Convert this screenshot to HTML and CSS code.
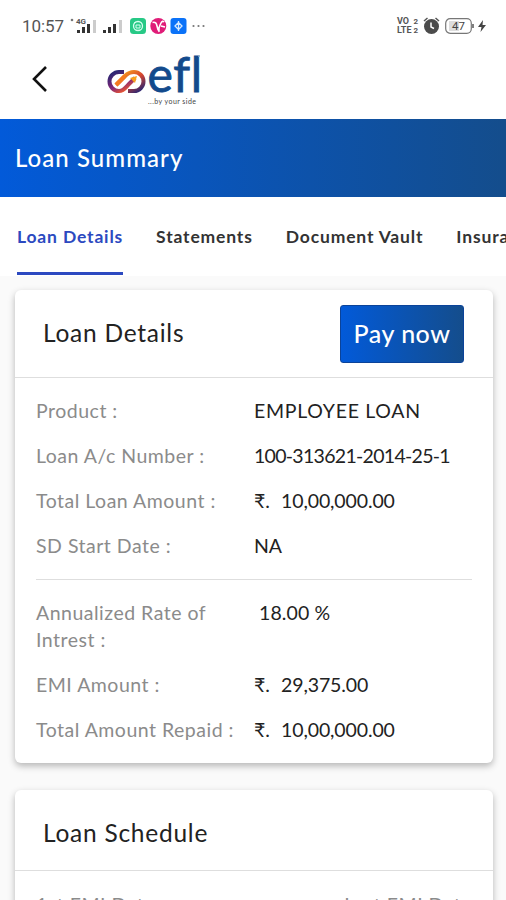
FILE: index.html
```html
<!DOCTYPE html>
<html lang="en">
<head>
    <meta charset="UTF-8">
    <meta name="viewport" content="width=device-width, initial-scale=1.0">
    <title>Loan Summary</title>
    <link rel="stylesheet" href="styles.css">
</head>
<body>
    <div class="status-bar">
        <span class="time">10:57</span>
        <svg class="signals" width="55" height="20" viewBox="0 0 55 20">
            <circle cx="2" cy="4" r="1.3" fill="#777"/>
            <text x="6" y="8" font-size="8" font-weight="700" fill="#555">4G</text>
            <g fill="#333">
                <rect x="7" y="14" width="3" height="3"/>
                <rect x="12" y="11" width="3" height="6"/>
                <rect x="17" y="8" width="3" height="9"/>
                <rect x="33" y="14" width="3" height="3"/>
                <rect x="38" y="11" width="3" height="6"/>
                <rect x="43" y="8" width="3" height="9"/>
            </g>
            <rect x="23" y="4" width="3" height="13" fill="#ccc"/>
            <rect x="49" y="4" width="3" height="13" fill="#ccc"/>
        </svg>
        <svg class="app-icons" width="77" height="16" viewBox="0 0 77 16">
            <rect x="0" y="0" width="16" height="16" rx="3.5" fill="#27c986"/>
            <circle cx="8" cy="8" r="4.5" fill="none" stroke="#d5fff0" stroke-width="1.3"/>
            <path d="M6 7h4v3H6zM4 5l2-1" fill="none" stroke="#d5fff0"/>
            <circle cx="28.3" cy="8" r="8" fill="#e01c78"/>
            <path d="M22.5 4.5c3-1 4 1 4.5 3.5s1 4 2 5M29 14c-1-5 1-7 2-9s2-2 3-1M31 8l4 1" fill="none" stroke="#fff" stroke-width="1.6"/>
            <rect x="40.5" y="0" width="16" height="16" rx="3" fill="#0b72f8"/>
            <path d="M48.5 3v10M45 8l3.5-3.5L52 8l-3.5 3.5z" fill="none" stroke="#d7eaff" stroke-width="1.3"/>
            <g fill="#777">
                <circle cx="63.5" cy="8" r="1.1"/>
                <circle cx="68.5" cy="8" r="1.1"/>
                <circle cx="73.5" cy="8" r="1.1"/>
            </g>
        </svg>
        <div class="status-right">
            <span class="volte"><span>VO <i>2</i></span><span>LTE<i>2</i></span></span>
            <svg width="17" height="18" viewBox="0 0 17 18">
                <circle cx="8.5" cy="9.5" r="7.5" fill="#4b4b4b"/>
                <path d="M1 4l3.5-3M16 4l-3.5-3" stroke="#555" stroke-width="1.5"/>
                <path d="M8 5.5v4.5l3 1.5" fill="none" stroke="#fff" stroke-width="1.5"/>
            </svg>
            <svg class="battery" width="29" height="16" viewBox="0 0 29 16">
                <rect x="4" y="3" width="10" height="10" fill="#ddd"/>
                <rect x="0.7" y="0.7" width="25.6" height="14.6" rx="4.5" fill="none" stroke="#777" stroke-width="1.2"/>
                <path d="M28 6v4" stroke="#555" stroke-width="1.5"/>
                <text x="13.5" y="12" text-anchor="middle" font-size="11.5" fill="#444">47</text>
            </svg>
            <svg class="bolt" width="8" height="12" viewBox="0 0 8 12">
                <path d="M5 0L0 7h3.5L2.5 12 8 5H4.5z" fill="#444"/>
            </svg>
        </div>
    </div>

    <div class="app-bar">
        <svg class="back" width="16" height="28" viewBox="0 0 16 28">
            <path d="M14 2L2 14l12 12" fill="none" stroke="#111" stroke-width="2.6"/>
        </svg>
        <svg class="logo" width="98" height="58" viewBox="0 0 98 58">
            <defs>
                <linearGradient id="loopLeft" gradientUnits="userSpaceOnUse" x1="14" y1="20" x2="24" y2="40">
                    <stop offset="0" stop-color="#2c2672"/>
                    <stop offset="0.6" stop-color="#842779"/>
                    <stop offset="1" stop-color="#f1592a"/>
                </linearGradient>
                <linearGradient id="loopRight" gradientUnits="userSpaceOnUse" x1="20" y1="20" x2="34" y2="42">
                    <stop offset="0" stop-color="#f9a01b"/>
                    <stop offset="0.5" stop-color="#d6452f"/>
                    <stop offset="1" stop-color="#2c2672"/>
                </linearGradient>
            </defs>
            <g fill="none" stroke-width="4">
                <path d="M19 22H14A9.5 9.5 0 0 0 14 41c5 0 7-4 10-7l6-6" stroke="url(#loopLeft)"/>
                <path d="M11 35l9-9c3-3 5-4 9-4A9.5 9.5 0 0 1 29 41H23" stroke="url(#loopRight)"/>
                <path d="M11 35l9-9" stroke="#f57a20"/>
            </g>
            <path d="M25 28l7-2-2 7z" fill="#f9a01b"/>
            <text class="logo-name" x="42.5" y="42">efl</text>
            <circle cx="94" cy="6" r="1" fill="#8aa5c5"/>
            <text class="logo-tag" x="43" y="54" textLength="48">...by your side</text>
        </svg>
    </div>

    <h1 class="page-title">Loan Summary</h1>

    <div class="tabs">
        <a class="tab active">Loan Details</a>
        <a class="tab">Statements</a>
        <a class="tab">Document Vault</a>
        <a class="tab">Insurance</a>
    </div>

    <div class="content">
        <div class="card">
            <div class="card-header">
                <h2>Loan Details</h2>
                <button class="pay-btn">Pay now</button>
            </div>
            <div class="card-body">
                <div class="row"><span class="label">Product :</span><span class="value caps">EMPLOYEE LOAN</span></div>
                <div class="row"><span class="label">Loan A/c Number :</span><span class="value account">100-313621-2014-25-1</span></div>
                <div class="row"><span class="label">Total Loan Amount :</span><span class="value"><span class="rupee">₹.</span>10,00,000.00</span></div>
                <div class="row"><span class="label">SD Start Date :</span><span class="value">NA</span></div>
                <hr>
                <div class="row"><span class="label">Annualized Rate of Intrest :</span><span class="value rate">18.00 %</span></div>
                <div class="row"><span class="label">EMI Amount :</span><span class="value"><span class="rupee">₹.</span>29,375.00</span></div>
                <div class="row"><span class="label">Total Amount Repaid :</span><span class="value"><span class="rupee">₹.</span>10,00,000.00</span></div>
            </div>
        </div>

        <div class="card">
            <div class="card-header schedule">
                <h2>Loan Schedule</h2>
            </div>
            <div class="dates">
                <span>1st EMI Date</span>
                <span>Last EMI Date</span>
            </div>
        </div>
    </div>
</body>
</html>
```
FILE: styles.css
```css
* {
    box-sizing: border-box;
}

body {
    margin: 0;
    height: 900px;
    overflow: hidden;
    display: flex;
    flex-direction: column;
    font-family: Lato, "Noto Sans", sans-serif;
    background-color: #fafafa;
}

.status-bar {
    flex: none;
    height: 50px;
    padding: 2px 20px 0 22px;
    display: flex;
    align-items: center;
    background-color: #fff;
    font-family: Roboto, sans-serif;
    color: #555;
}

.time {
    width: 48px;
    font-size: 17px;
    letter-spacing: -0.1px;
}

.app-icons {
    margin-left: 5px;
}

.status-right {
    margin-left: auto;
    display: flex;
    align-items: center;
}

.volte {
    width: 21px;
    margin-right: 5px;
    font-size: 9px;
    line-height: 9px;
    font-weight: 700;
}

.volte span {
    display: flex;
    justify-content: space-between;
}

.volte i {
    font-size: 8px;
    font-style: normal;
}

.battery {
    margin-left: 5px;
}

.bolt {
    margin-left: 4px;
}

.app-bar {
    flex: none;
    height: 69px;
    padding-left: 32px;
    display: flex;
    align-items: flex-start;
    background-color: #fff;
}

.back {
    margin-top: 15px;
}

.logo {
    margin-left: 57px;
}

.logo-name {
    font-family: Lato, sans-serif;
    font-size: 48px;
    letter-spacing: 0.6px;
    fill: #124a8c;
    stroke: #124a8c;
    stroke-width: 0.8px;
}

.logo-tag {
    font-size: 7px;
    fill: #444;
}

.page-title {
    flex: none;
    height: 78px;
    margin: 0;
    padding-left: 15px;
    font-size: 24px;
    font-weight: 500;
    line-height: 77px;
    letter-spacing: 1.05px;
    color: #fff;
    background: linear-gradient(to right, #025ad9, #144d8c);
}

.tabs {
    flex: none;
    height: 79px;
    padding-left: 17px;
    display: flex;
    gap: 33px;
    overflow: hidden;
    background-color: #fff;
    white-space: nowrap;
}

.tab {
    height: 78px;
    font-size: 17.5px;
    font-weight: 700;
    line-height: 79px;
    letter-spacing: 0.84px;
    color: #333;
}

.tab.active {
    color: #2c49c0;
    border-bottom: 3px solid #2c49c0;
}

.content {
    padding: 14px 13px 0 15px;
}

.card {
    margin-bottom: 27px;
    background-color: #fff;
    border-radius: 6px;
    box-shadow: 0 3px 7px rgba(0, 0, 0, 0.28);
}

.card-header {
    height: 88px;
    padding: 0 29px 0 28px;
    display: flex;
    align-items: center;
    justify-content: space-between;
    border-bottom: 1px solid #dedede;
}

.card-header h2 {
    margin: 0 0 2px;
    font-size: 24.5px;
    font-weight: 400;
    letter-spacing: 0.75px;
    color: #222;
}

.pay-btn {
    width: 124px;
    height: 58px;
    padding: 0 0 2px;
    border: 1px solid #0b4399;
    border-radius: 3px;
    background: linear-gradient(to right, #025ad9, #144d8c);
    font-family: inherit;
    font-size: 25px;
    font-weight: 500;
    letter-spacing: 0.5px;
    color: #fff;
}

.card-body {
    padding: 19px 21px 20px;
}

.row {
    margin-bottom: 18px;
    display: flex;
    font-size: 19.5px;
    line-height: 27px;
    letter-spacing: 0.5px;
}

.row:last-child {
    margin-bottom: 0;
}

.label {
    flex: none;
    width: 218px;
    color: #8b8b8b;
}

/* keeps "of" on the first line and "Intrest" on the second */
.label {
    padding-right: 10px;
}

.value {
    color: #222;
    letter-spacing: -0.12px;
    white-space: nowrap;
}

.value.caps {
    letter-spacing: 0.7px;
}

.value.account {
    letter-spacing: -0.7px;
}

.rupee {
    display: inline-block;
    width: 27px;
}

.value.rate {
    padding-left: 5px;
    letter-spacing: 0.1px;
}

.card-body hr {
    height: 1px;
    margin: 20px 0 19px;
    border: none;
    background-color: #dedede;
}

.card-header.schedule {
    height: 81px;
    padding-top: 7px;
}

.dates {
    height: 60px;
    padding: 20px 21px 0;
    display: flex;
    justify-content: space-between;
    font-size: 19.5px;
    line-height: 27px;
    letter-spacing: 0.5px;
    color: #8b8b8b;
}
```
